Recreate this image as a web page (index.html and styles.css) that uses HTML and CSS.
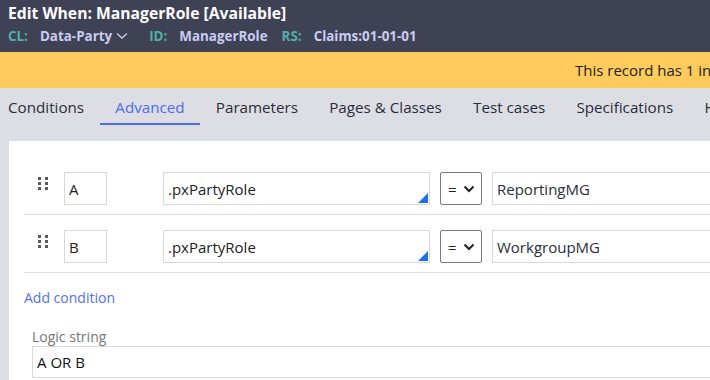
FILE: index.html
```html
<!DOCTYPE html>
<html>
<head>
<meta charset="utf-8">
<link rel="stylesheet" href="styles.css">
</head>
<body>
<header class="hdr">
  <div class="title">Edit When: ManagerRole [Available]</div>
  <div class="meta">
    <span class="k">CL:</span><span class="v">Data-Party</span><svg class="chev" width="12" height="8" viewBox="0 0 12 8"><path d="M1 1.5 L6 6 L11 1.5" fill="none" stroke="#c9cdf0" stroke-width="1.4"/></svg>
    <span class="k k2">ID:</span><span class="v">ManagerRole</span>
    <span class="k k3">RS:</span><span class="v">Claims:01-01-01</span>
  </div>
</header>
<div class="banner"><span class="msg">This record has 1 invalid reference</span></div>
<nav class="tabs">
  <span class="tab">Conditions</span>
  <span class="tab active">Advanced</span>
  <span class="tab">Parameters</span>
  <span class="tab">Pages &amp; Classes</span>
  <span class="tab">Test cases</span>
  <span class="tab">Specifications</span>
  <span class="tab">History</span>
</nav>
<main class="panel">
  <div class="rows">
    <div class="row">
      <span class="handle"><i></i><i></i><i></i><i></i><i></i><i></i></span>
      <div class="box lbl">A</div>
      <div class="box prop">.pxPartyRole<span class="tri"></span></div>
      <div class="sel"><span>=</span><svg width="12" height="8" viewBox="0 0 12 8"><path d="M1.5 1.5 L6 6 L10.5 1.5" fill="none" stroke="#222" stroke-width="2"/></svg></div>
      <div class="box val">ReportingMG</div>
    </div>
    <div class="row">
      <span class="handle"><i></i><i></i><i></i><i></i><i></i><i></i></span>
      <div class="box lbl">B</div>
      <div class="box prop">.pxPartyRole<span class="tri"></span></div>
      <div class="sel"><span>=</span><svg width="12" height="8" viewBox="0 0 12 8"><path d="M1.5 1.5 L6 6 L10.5 1.5" fill="none" stroke="#222" stroke-width="2"/></svg></div>
      <div class="box val">WorkgroupMG</div>
    </div>
  </div>
  <a class="add">Add condition</a>
  <div class="logic">
    <div class="llabel">Logic string</div>
    <div class="box linput">A OR B</div>
  </div>
</main>
</body>
</html>
```
FILE: styles.css
```css
* { box-sizing: border-box; }
html, body { margin: 0; padding: 0; }
body {
  width: 710px; height: 380px; overflow: hidden;
  font-family: "Open Sans", "Noto Sans", sans-serif;
  background: #dddee3;
  color: #222;
}
.hdr {
  background: #3f4155;
  height: 52px;
  padding: 2px 8px 0;
}
.title {
  color: #fff;
  font-weight: 700;
  font-size: 15.7px;
  line-height: 22px;
  white-space: nowrap;
}
.meta {
  display: flex; align-items: center;
  font-size: 13.4px; font-weight: 700;
  line-height: 22px;
  margin-top: 1px;
  white-space: nowrap;
}
.meta .k { color: #4fb0a6; margin-right: 12px; }
.meta .k2 { margin-left: 21px; }
.meta .k3 { margin-left: 14px; }
.meta .v { color: #c9cdf0; }
.chev { margin-left: 4px; }
.banner {
  background: #ffcb5c;
  height: 36px;
  display: flex; align-items: center;
  padding-left: 575px;
  white-space: nowrap; overflow: hidden;
  font-size: 15px; color: #222;
}
.tabs {
  display: flex;
  height: 53px;
  white-space: nowrap;
  overflow: hidden;
}
.tab {
  flex-shrink: 0;
  font-size: 15.2px;
  color: #2b2c3a;
  padding: 8px 15.6px 0;
  height: 37px;
  line-height: 22px;
}
.tab:first-child { padding-left: 8px; }
.tab.active {
  color: #4e6bf0;
  border-bottom: 2px solid #4e6bf0;
}
.panel {
  background: #fff;
  margin-left: 9px;
  height: 239px;
  padding: 16px 0 0 15px;
}
.row {
  display: flex; align-items: center;
  padding: 15px 0 9px 14px;
  border-bottom: 1px solid #dcdcdc;
}
.handle {
  flex-shrink: 0;
  display: grid;
  grid-template-columns: 3px 3px;
  grid-auto-rows: 3px;
  column-gap: 4px; row-gap: 2px;
  width: 10px;
  margin-right: 16px;
  margin-top: -10px;
}
.handle i { background: #5a5a5a; display: block; }
.box {
  flex-shrink: 0;
  border: 1px solid #d8d8d8;
  height: 33px;
  font-size: 15px;
  display: flex; align-items: center;
  padding-left: 4px;
  position: relative;
  white-space: nowrap;
}
.lbl { width: 43px; margin-right: 56px; }
.prop { width: 267px; margin-right: 10px; }
.tri {
  position: absolute; right: 1px; bottom: 1px;
  width: 0; height: 0;
  border-left: 10px solid transparent;
  border-bottom: 10px solid #1e6fef;
}
.sel {
  flex-shrink: 0;
  width: 42px; height: 33px;
  border: 1px solid #7a7a7a;
  border-radius: 2px;
  display: flex; align-items: center; justify-content: space-between;
  padding: 0 6px 0 7px;
  font-size: 15px;
  margin-right: 10px;
}
.val { flex: 1 1 auto; padding-left: 4px; color: #2a2d3a; border-right: none; }
.add {
  display: block;
  color: #5470f0;
  font-size: 14px;
  margin-top: 15px;
  line-height: 20px;
}
.logic { margin-left: 8px; margin-top: 20px; }
.llabel { color: #777; font-size: 14px; line-height: 18px; }
.linput { height: 32px; padding-left: 4px; color: #111; border-right: none; }
```
